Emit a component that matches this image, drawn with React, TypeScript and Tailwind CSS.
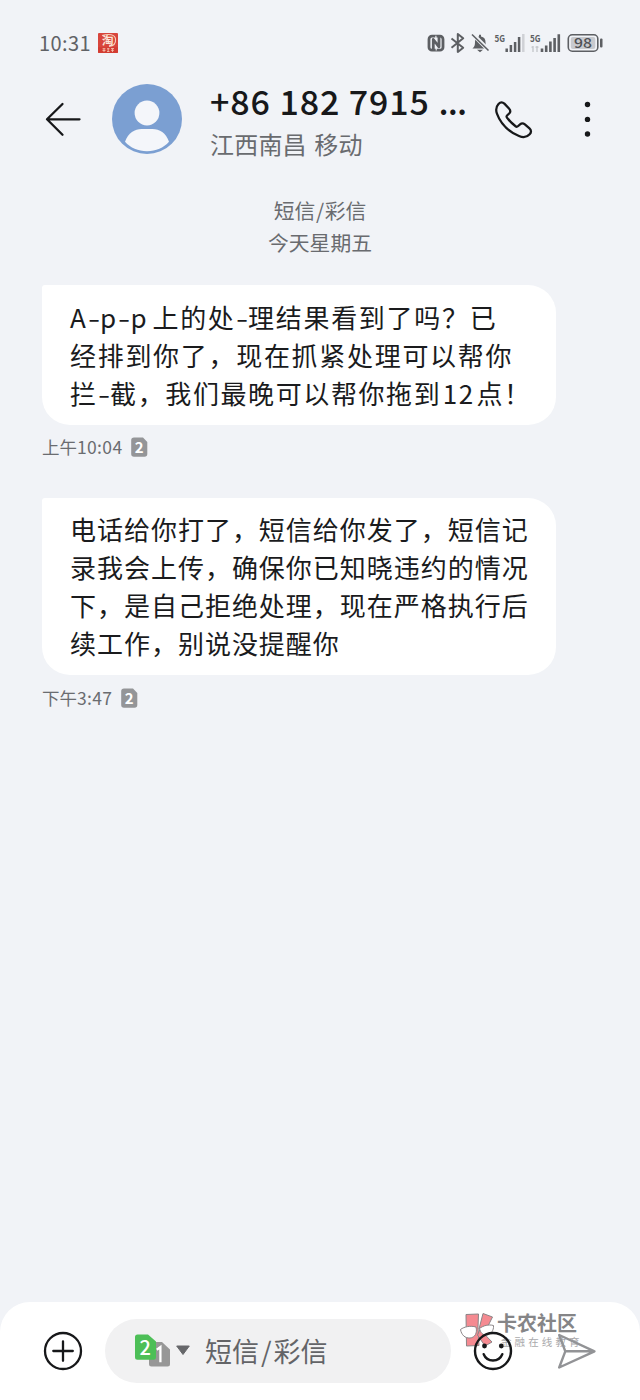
import React from "react";

function StatusBar() {
  return (
    <div className="flex h-[66px] shrink-0 items-start justify-between pl-[39px] pr-[36px] pt-[32px] text-[#606266]">
      <div className="flex h-[22px] items-center gap-[7px]">
        <span className="w-[52px] whitespace-nowrap text-[20px] leading-[22px] tracking-[0.4px]">10:31</span>
        <svg width="20" height="20" viewBox="0 0 20 20" overflow="visible">
          <rect width="20" height="20" rx="1" fill="#d8453c" />
          <path d="M4 2.500C11 .5 17 1.500 17.500 6S15 13 11 13.500" fill="none" stroke="#f6d2bd" strokeWidth="1.100" />
          <text x="9.800" y="12" textAnchor="middle" fontSize="11.500" fontWeight="700" fill="#fbe5d8">淘</text>
          <path d="M0 14.300H20V19a1 1 0 0 1-1 1H1a1 1 0 0 1-1-1z" fill="#d33c32" />
          <path d="M4.500 15.800h3M6 15v4M4.500 17.500h3M9 15.800h2.500M10.200 15v4M9 18.500h2.500M13 15.500h3M13 17.300h3M14.500 15.500v3.500" stroke="#f6c8b4" strokeWidth=".8" />
        </svg>
      </div>
      <svg width="177" height="22" viewBox="0 0 177 22" fill="none">
        <rect x="2" y="4.200" width="14" height="14" rx="3" stroke="#5d5f63" strokeWidth="2.800" />
        <path d="M6.300 17.500V7.500L12 14.800V4.800" stroke="#5d5f63" strokeWidth="2.800" strokeLinejoin="round" />
        <path d="M8.900 3.800V7M9.200 15.500V18.600" stroke="#f1f3f7" strokeWidth="1.100" />
        <path d="M24.500 6.500L36.200 15.700 30.800 20V2L36.200 6.300 24.500 15.700" stroke="#5d5f63" strokeWidth="2" strokeLinejoin="round" />
        <path d="M45.500 16.500c2-2 2.500-3 2.500-7 0-3 2-4.500 4-5V2.800h2V4.500c3 .5 4.500 2.500 4.500 5.500 0 3 .8 4.500 2.500 6.500z" fill="#5d5f63" />
        <path d="M50 17.800h6L53 20.200z" fill="#5d5f63" />
        <path d="M45 1.500L61.500 18" stroke="#f1f3f7" strokeWidth="4" />
        <path d="M45 2.500L61.500 18.500" stroke="#5d5f63" strokeWidth="1.600" />
        <text x="67.500" y="9.500" fontSize="9.500" fontWeight="700" fill="#5d5f63" textLength="10.500" lengthAdjust="spacingAndGlyphs">5G</text>
        <path d="M79.700 20v-3.500M83.900 20v-7M88.100 20v-10M92.100 20V5" stroke="#5d5f63" strokeWidth="2.500" />
        <path d="M96.300 20V2" stroke="#cfd1d6" strokeWidth="2.500" />
        <text x="103" y="9.500" fontSize="9.500" fontWeight="700" fill="#5d5f63" textLength="10.500" lengthAdjust="spacingAndGlyphs">5G</text>
        <path d="M106 14v6M110 14v6M104.500 15.200h2M108.500 15.200h3" stroke="#c3c5c9" strokeWidth="1.300" />
        <path d="M115 20v-3.500M119.200 20v-6.500M123.400 20V9.500M127.600 20V6M131.800 20V2.300" stroke="#5d5f63" strokeWidth="2.600" />
        <rect x="141.300" y="2.800" width="29.500" height="16.400" rx="4" stroke="#5d5f63" strokeWidth="1.600" />
        <rect x="143.800" y="5" width="24.500" height="12" rx="2" fill="#c8cacf" />
        <text x="155.900" y="16" textAnchor="middle" fontSize="13.500" fontWeight="500" fill="#4f5155" textLength="18" lengthAdjust="spacingAndGlyphs">98</text>
        <rect x="173" y="6.500" width="2.500" height="9" rx="1" fill="#5d5f63" />
      </svg>
    </div>
  );
}

function Header() {
  return (
    <header className="flex h-[110px] shrink-0 items-start pl-[45px]">
      <svg className="mt-[35px] shrink-0" width="36" height="36" viewBox="0 0 36 36" fill="none" stroke="#17181a" strokeWidth="2.3" strokeLinecap="round" strokeLinejoin="round">
        <path d="M17.500 3L2 18.300 17.500 33.700M2 18.300H34.500" />
      </svg>
      <svg className="ml-[31px] mt-[18px] shrink-0" width="70" height="70" viewBox="0 0 70 70">
        <circle cx="35" cy="35" r="35" fill="#7b9fd2" />
        <circle cx="35" cy="29" r="12.400" fill="#f4f6fa" />
        <path d="M13 57.700C16 49 23 45 29.500 45h11C47.500 45 54 49 57 57.700 51.500 63.800 44 67.200 35 67.200S18.500 63.800 13 57.700z" fill="#f4f6fa" />
      </svg>
      <div className="ml-[28px] mt-[15px] w-[284px] whitespace-nowrap">
        <div className="text-[34px] font-medium leading-[40px] tracking-[0.9px] text-[#17181a]">+86 182 7915 <span className="tracking-[-0.800px]">...</span></div>
        <div className="mt-[8px] text-[24px] leading-[30px] tracking-[0.200px] text-[#696b6f] [word-spacing:1.800px]">江西南昌 移动</div>
      </div>
      <svg className="ml-[1px] mt-[34px] shrink-0" width="40" height="40" viewBox="0 0 40 40" fill="none" stroke="#17181a" strokeWidth="2.3" strokeLinejoin="round">
        <path d="M4.600 3.600C6.400 1.600 8.600 1.400 10.600 3.200L15.300 8.200C17 10 17 11.500 15.700 13L13.300 15.300C12.600 16 12.700 16.700 13.200 17.400C16 21.200 18.500 23.700 22 26.300C22.900 27 23.600 27 24.400 26.300L26.600 24.300C28.200 22.900 29.800 23 31.500 24.300L36.200 28.400C38.200 30.200 38.200 32.600 36.400 34.500C33.700 37.500 29.500 38 25.500 36.300C15 31.800 6.500 23.200 3 13.500C1.700 9.800 2.200 6.200 4.600 3.600Z" transform="translate(-1 0.500) scale(.98)" />
      </svg>
      <svg className="ml-[48px] mt-[35px] shrink-0" width="10" height="36" viewBox="0 0 10 36" fill="#17181a">
        <circle cx="4.500" cy="3.500" r="2.700" />
        <circle cx="4.500" cy="18.400" r="2.700" />
        <circle cx="4.500" cy="33" r="2.700" />
      </svg>
    </header>
  );
}

function SimBadge() {
  return (
    <svg width="17" height="20" viewBox="0 0 17 20">
      <path d="M3 0.500h9L16.300 5v12a2.800 2.800 0 0 1-2.800 2.800H3A2.800 2.800 0 0 1 .2 17V3.300A2.800 2.800 0 0 1 3 .5z" fill="#949598" />
      <text x="8.200" y="15.700" textAnchor="middle" fontSize="15" fontWeight="700" fill="#fff">2</text>
    </svg>
  );
}

function Stamp({ day, time }: { day: string; time: string }) {
  return (
    <div className="flex h-[22px] items-center gap-[9px] pl-[42px]">
      <span className="whitespace-nowrap text-[17.500px] leading-[22px] text-[#6a6c70]">{day}<span className="tracking-[0.350px]">{time}</span></span>
      <SimBadge />
    </div>
  );
}

function Dash() {
  return <span className="inline-block w-[12.500px] origin-left scale-x-[1.350] tracking-normal">-</span>;
}

const bubble = "ml-[42px] w-[514px] rounded-[28px] rounded-tl-[3px] bg-white pl-[28px] text-[26px] leading-[38px] text-[#1a1b1d] whitespace-nowrap";

function Composer() {
  return (
    <footer className="relative flex h-[98px] shrink-0 items-start rounded-t-[30px] bg-white pl-[43px] pt-[17px]">
      <div className="absolute left-[459px] top-[9px] flex items-start">
        <svg width="38" height="38" viewBox="0 0 38 38" stroke="#8b8587" strokeWidth="1">
          <path d="M7 3.500L19.500 3 19 16 20 34.500 7.500 35z" fill="#f58a91" />
          <path d="M24 2.500L33.500 6 29 15 20 18z" fill="#f58a91" />
          <path d="M21 18.500L33 31 26 35 18.500 24z" fill="#f58a91" />
          <path d="M1.500 18.500c4-3 10-4 15.500-2.500 1.500 6-1 10.500-6 11-5 .3-8.500-3-9.500-8.500zM20.500 17.500c4-3 9-4.300 14-3 .5 5-3 9.500-7 9.500-4 .2-6-2.500-7-6.500z" fill="#fff" />
        </svg>
        <div className="whitespace-nowrap">
          <div className="text-[20px] font-bold leading-[24px] text-[#858587]">卡农社区</div>
          <div className="ml-[4px] mt-[1px] text-[10.500px] leading-[12px] tracking-[3.100px] text-[#aaaaac]">金融在线教育</div>
        </div>
      </div>
      <svg className="mt-[12px] shrink-0" width="40" height="40" viewBox="0 0 40 40" fill="none" stroke="#17181a" strokeWidth="2.300" strokeLinecap="round">
        <circle cx="20" cy="20" r="18" />
        <path d="M10.300 20h19.500M20 10.300v19.500" />
      </svg>
      <div className="ml-[22px] flex h-[64px] w-[346px] items-center rounded-full bg-[#f1f1f2] pl-[29px]">
        <svg width="57" height="34" viewBox="0 0 57 34">
          <path d="M19 8h9l8 7.500V30a2.500 2.500 0 0 1-2.500 2.500h-16A2.500 2.500 0 0 1 15 30V11z" fill="#979797" />
          <path d="M3.500 0.500H14L22 7.500v15.700A2.500 2.500 0 0 1 19.500 25.700H3.500A2.500 2.500 0 0 1 1 23.200V3A2.500 2.500 0 0 1 3.500.5z" fill="#4dbf57" />
          <text x="11.300" y="21" textAnchor="middle" fontSize="20" fontWeight="500" fill="#fff">2</text>
          <path d="M22.800 15.700L26.400 13.100V28.300" fill="none" stroke="#fff" strokeWidth="2.300" />
          <path d="M42.700 12h12.600L49 20.500z" fill="#66676a" stroke="#66676a" strokeLinejoin="round" />
        </svg>
        <span className="ml-[14px] whitespace-nowrap text-[27px] leading-[40px] text-[#636467]">短信<span className="px-[2px]">/</span>彩信</span>
      </div>
      <svg className="relative ml-[22px] mt-[12px] shrink-0" width="40" height="40" viewBox="0 0 40 40" fill="none" stroke="#17181a" strokeWidth="2.400" strokeLinecap="round">
        <circle cx="20" cy="20" r="18" />
        <path d="M10.700 23.200C14 31.500 26 31.500 29.300 23.200" />
        <circle cx="11.500" cy="15" r="2.400" fill="#17181a" stroke="none" />
        <circle cx="28.300" cy="15" r="2.400" fill="#17181a" stroke="none" />
      </svg>
      <svg className="relative ml-[44px] mt-[14px] shrink-0" width="40" height="38" viewBox="0 0 40 38" fill="none" stroke="#929396" strokeWidth="2.400" strokeLinejoin="round">
        <path d="M2.200 2L37.500 18.300 2.200 34.500 8.300 18.300zM8.300 18.300H37.500" />
      </svg>
    </footer>
  );
}

export default function App() {
  return (
    <div className="flex h-[1400px] w-[640px] flex-col overflow-hidden bg-[#f1f3f7] font-['Noto_Sans_CJK_SC',sans-serif]">
      <StatusBar />
      <Header />
      <main className="flex flex-1 flex-col">
        <div className="mt-[18px] text-center text-[20.800px] leading-[32px] text-[#696b6f]">
          <div>短信<span className="px-[0.700px]">/</span>彩信</div>
          <div>今天星期五</div>
        </div>
        <div className={`mt-[27px] h-[140px] pt-[13px] ${bubble}`}>
          <div className="tracking-[1.700px]"><span className="tracking-[1.800px]">A<Dash />p<Dash /><span className="mr-[4px]">p</span></span>上的处<Dash />理结果看到了吗？已</div>
          <div className="tracking-[1.700px]">经排到你了，现在抓紧处理可以帮你</div>
          <div className="tracking-[1.600px]">拦<Dash />截，我们最晚可以帮你拖到<span className="mx-[1.500px]">12</span>点！</div>
        </div>
        <div className="mt-[11px]"><Stamp day="上午" time="10:04" /></div>
        <div className={`mt-[40px] h-[177px] pt-[12px] tracking-[0.980px] ${bubble}`}>
          <div>电话给你打了，短信给你发了，短信记</div>
          <div>录我会上传，确保你已知晓违约的情况</div>
          <div>下，是自己拒绝处理，现在严格执行后</div>
          <div>续工作，别说没提醒你</div>
        </div>
        <div className="mt-[12px]"><Stamp day="下午" time="3:47" /></div>
      </main>
      <Composer />
    </div>
  );
}
